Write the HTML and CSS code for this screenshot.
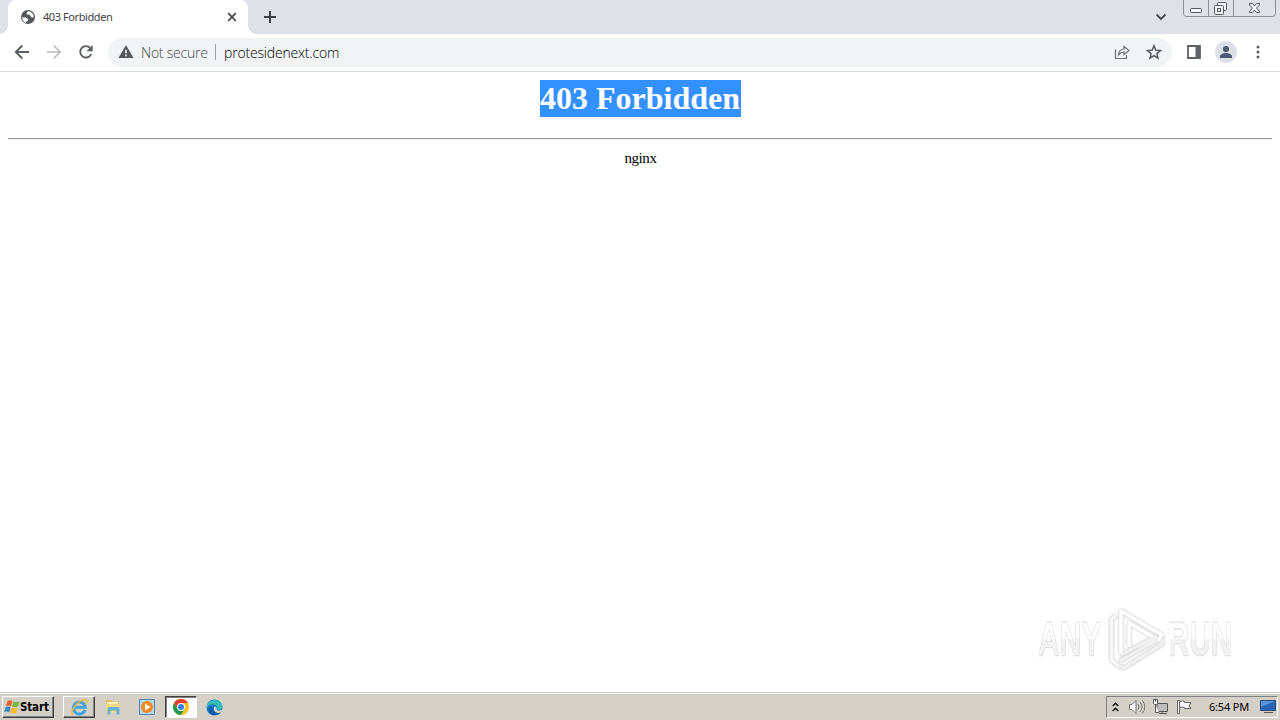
FILE: index.html
```html
<!DOCTYPE html>
<html lang="en">
<head>
<meta charset="utf-8">
<title>403 Forbidden</title>
<link rel="stylesheet" href="styles.css">
</head>
<body>
<header class="tabstrip">
  <div class="tab">
    <svg class="globe" width="16" height="16" viewBox="0 0 16 16"><circle cx="8" cy="8" r="7" fill="#55595d"/><path d="M2.300 8.200 5.800 8.500 8.300 10.200 7.800 12 6 12.500V14C3.500 13 2 11 2.300 8.200ZM8 2.200 6.400 4.100 7.200 5.600 9.700 5.800 11.300 8.200 13.700 8.500C14 5 11.500 2.500 8 2.200Z" fill="#fff"/></svg>
    <span class="tab-title">403 Forbidden</span>
    <svg class="tab-close" width="10" height="10" viewBox="0 0 10 10"><path d="M1.200 1.200l7.600 7.600M8.800 1.200 1.200 8.800" stroke="#45494d" stroke-width="1.700"/></svg>
  </div>
  <svg class="new-tab" width="14" height="14" viewBox="0 0 14 14"><path d="M7 1v12M1 7h12" stroke="#3c4043" stroke-width="2"/></svg>
  <svg class="tab-search" width="12" height="8" viewBox="0 0 12 8"><path d="M1.500 1.500 6 6l4.500-4.500" fill="none" stroke="#45494d" stroke-width="1.800"/></svg>
  <svg class="window-buttons" width="94" height="18" viewBox="0 0 94 18"><path d="M.5 0v13.500q0 3 3 3h86q3 0 3-3V0M25.500 0v16.500M50.500 0v16.500" fill="none" stroke="#8c9099"/><g fill="#f4f5f7" stroke="#545963"><rect x="7.500" y="8.500" width="11" height="4" rx="1"/><rect x="34.500" y="2.500" width="9" height="8" rx="1"/><rect x="31.500" y="5.500" width="9" height="9" rx="1"/><rect x="34.500" y="8.500" width="3" height="3"/><path d="M66.500 3.500h3l2 2.500 2-2.500h3v1.500L73.500 8l3 3.300v1.200h-3l-2-2.500-2 2.500h-3v-1.200l3-3.300-3-3z"/></g></svg>
</header>
<nav class="toolbar">
  <svg class="back" width="16" height="16" viewBox="0 0 16 16" fill="none" stroke="#5a5e62" stroke-width="1.900"><path d="M15 8H2.500M8.300 1.500 1.800 8l6.500 6.500"/></svg>
  <svg class="forward" width="16" height="16" viewBox="0 0 16 16" fill="none" stroke="#b8babd" stroke-width="1.700"><path d="M1 8h12.500M7.700 1.500 14.200 8l-6.500 6.500"/></svg>
  <svg class="reload" width="16" height="16" viewBox="0 0 16 16"><path d="M13.200 10A5.700 5.700 0 1 1 12.300 4.200" fill="none" stroke="#5a5e62" stroke-width="1.900"/><path d="M14.700 1v6.300H8.400z" fill="#5a5e62"/></svg>
  <div class="omnibox">
    <svg width="16" height="14" viewBox="0 0 16 14"><path d="M8 0 15.500 13H.5z" fill="#55595d"/><path d="M8 4.700v3.500M8 9.500v1.700" stroke="#f1f3f4" stroke-width="1.600"/></svg>
    <span class="security">Not secure</span>
    <span class="divider"></span>
    <span class="url">protesidenext.com</span>
    <svg class="share" width="16" height="16" viewBox="0 0 16 16" fill="none" stroke="#6b6f73" stroke-width="1.200"><path d="M1.500 5.500v9h11v-3.500M4.500 11c.3-4 2.300-6 5.500-6V2.500l5 4-5 4V8C7.500 8 6 9 4.500 11z"/></svg>
    <svg class="star" width="16" height="16" viewBox="0 0 16 16" fill="none" stroke="#505458" stroke-width="1.400"><path d="m8 1.700 1.800 4.400 4.700.4-3.600 3.100 1.100 4.600L8 11.700l-4 2.500 1.100-4.600-3.600-3.100 4.700-.4z"/></svg>
  </div>
  <svg class="panel" width="14" height="14" viewBox="0 0 14 14"><path d="M1 1h12v12H1z" fill="#fff" stroke="#5f6368" stroke-width="1.800"/><path d="M8.500 1H13v12H8.500z" fill="#5f6368"/></svg>
  <svg class="avatar" width="22" height="22" viewBox="0 0 22 22"><circle cx="11" cy="11" r="11" fill="#dce0e6"/><circle cx="11" cy="8" r="3.100" fill="#4d5872"/><path d="M5 17v-1.500c0-2.200 3.200-3.500 6-3.500s6 1.300 6 3.500V17z" fill="#4d5872"/></svg>
  <svg class="menu" width="4" height="14" viewBox="0 0 4 14" fill="#5a5e62"><circle cx="2" cy="2" r="1.500"/><circle cx="2" cy="7" r="1.500"/><circle cx="2" cy="12" r="1.500"/></svg>
</nav>
<main class="page">
  <h1><span class="selection">403 Forbidden</span></h1>
  <hr>
  <p class="server">nginx</p>
  <div class="watermark">
    <span class="wm-word wm-any">ANY</span>
    <svg class="wm-logo" width="58" height="64" viewBox="0 0 58 64" fill="none" stroke-linejoin="round" stroke-width="3.600"><path d="M8 9 3.500 12v41l7 6" stroke="#f8f8f8"/><path d="M13 47V4l41 24-3.500 5L21 16v24" stroke="#fff"/><path d="M13 48 49 29M12 54l38-22M10.500 59 16 61l38-24v-6" stroke="#f0f0f0"/></svg>
    <span class="wm-word wm-run">RUN</span>
  </div>
</main>
<footer class="taskbar">
  <div class="start">
    <svg width="17" height="16" viewBox="0 0 17 16"><path d="M3.500 2Q6 .5 8.500 2L7 7.200Q4.500 6 2 7z" fill="#e8622c"/><path d="M9.500 2.500q2.500 1.300 6-.2L14 7.500q-3 1.500-6 0z" fill="#75b83e"/><path d="M1.700 8q2.600-1 5 .2L5.200 13.500Q3 12 .2 13z" fill="#3e87cc"/><path d="M7.700 8.500q3 1.500 6 .2L12.200 14q-3 1.200-6-.3z" fill="#f5bd2d"/></svg>
    <span>Start</span>
  </div>
  <div class="task raised"><svg width="18" height="18" viewBox="0 0 18 18"><path d="M15 12A6 6 0 1 1 15.300 9.200H4.500" fill="none" stroke="#3fa4e0" stroke-width="2.900"/><path d="M3 16.700C-1.500 14.500 8.500 1.300 15.500 1.500c2.200.3 1.500 3.200 0 5" fill="none" stroke="#e8bd3c" stroke-width="1.500"/></svg></div>
  <svg class="folder" width="16" height="16" viewBox="0 0 16 16"><path d="M1 1h5l1 1.500h7V13H1z" fill="#e0bd60"/><path d="M2 3h11v5H2z" fill="#fff3b5"/><path d="M1 5h14v8.500H1z" fill="#f1d982"/><path d="M2.500 15.500V10Q2.500 8 4.500 8h8q2 0 2 2v5.500h-3v-4h-6v4z" fill="#65b1dd"/></svg>
  <svg class="media" width="16" height="16" viewBox="0 0 16 16"><path d="M.5.500h15v15H.5z" fill="#b7d8f0" stroke="#4d87b8"/><circle cx="8" cy="8" r="6" fill="#f28b20"/><path d="m6 4.500 5.500 3.500L6 11.500z" fill="#fff"/></svg>
  <div class="task pressed"><svg width="16" height="16" viewBox="0 0 16 16"><circle cx="8" cy="8" r="8" fill="#fbc116"/><path d="M1.070 4A8 8 0 0 1 14.930 4H8L4.540 10z" fill="#e43e30"/><path d="M1.070 4A8 8 0 0 0 8 16l3.460-6H4.540z" fill="#229a4b"/><circle cx="8" cy="8" r="4" fill="#fff"/><circle cx="8" cy="8" r="3" fill="#347de1"/></svg></div>
  <svg class="edge" width="17" height="17" viewBox="0 0 17 17"><circle cx="8.500" cy="8.500" r="8" fill="#1378c5"/><path d="M1 6.500C3 0 15-1.500 16.500 7c.3 3-2.500 4.500-6 3.500 2-3-1-5-4-5-2.500 0-4.500 1-5.500 3z" fill="#36bbb5"/><path d="M6.500 7.500c-1.500 3.500 2 7.500 8 5.500-2 4-8 4-10.500.5-2-3-.5-5.500 2.500-6z" fill="#1059a5"/><path d="M8 8.500c1-2 3-1 2.500 1.500-.2 1.500 3 2.500 6 .5l-1.500 3C10 15 7 12 8 8.500z" fill="#d4d0c8"/></svg>
  <div class="tray">
    <svg class="chevrons" width="7" height="10" viewBox="0 0 7 10"><path d="m.7 4 2.800-2.800L6.300 4M.7 9l2.800-2.800L6.300 9" fill="none" stroke="#111" stroke-width="1.500"/></svg>
    <svg class="sound" width="18" height="16" viewBox="0 0 18 16"><path d="M1.500 5.500H4l4-4v13l-4-4H1.500z" fill="#fafafa" stroke="#777"/><path d="M10 5q2 3 0 6M12 3q4 5 0 10M14.500 1.500q4.500 6.500 0 13" fill="none" stroke="#777"/></svg>
    <svg class="network" width="17" height="16" viewBox="0 0 17 16"><path d="M5 4.500h10.500v8H5zM7 14.500h8M10 12.500v2" fill="#bdbdbd" stroke="#555"/><path d="M1.500.500h4v4l-1 1h-2l-1-1zM3.500 5.500v8H7M3.500.500v2" fill="#fff" stroke="#555"/></svg>
    <svg class="flag" width="17" height="16" viewBox="0 0 17 16"><path d="M1.500 1.500h2v13h-2zM3.500 2.500q3-1 5 0v1h6.500l-2 3.500 2 2.500H8.500v-1q-2-1-5 0" fill="#f8f8f8" stroke="#666"/></svg>
    <span class="clock">6:54 PM</span>
    <svg class="desktop" width="16" height="14" viewBox="0 0 16 14"><path d="M.5.500h15v10H.5z" fill="#2865b8" stroke="#264b7a"/><path d="M1 1h14L1 7z" fill="#5796dc"/><path d="M4 12.500h9" stroke="#555"/></svg>
  </div>
</footer>
</body>
</html>
```
FILE: styles.css
```css
* { box-sizing: border-box; }
body { margin: 0; width: 1280px; height: 720px; overflow: hidden; display: flex; flex-direction: column; background: #fff; }
svg { display: block; flex: none; }
span { white-space: nowrap; }

.tabstrip { height: 34px; flex: none; display: flex; align-items: flex-start; padding-left: 8px; background: #dee1e6; }
.tab { position: relative; width: 240px; height: 34px; display: flex; align-items: center; padding: 0 11px 0 12px; background: #fff; border-radius: 8px 8px 0 0; }
.tab::before, .tab::after { content: ""; position: absolute; bottom: 0; width: 8px; height: 8px; }
.tab::before { left: -8px; background: radial-gradient(circle at 0 0, transparent 7.5px, #fff 8px); }
.tab::after { right: -8px; background: radial-gradient(circle at 100% 0, transparent 7.5px, #fff 8px); }
.tab-title { margin-left: 7px; font: 11px/14px "Noto Sans", sans-serif; letter-spacing: -0.42px; color: #3f4347; }
.tab-close { margin-left: auto; }
.new-tab { margin: 10px 0 0 15px; }
.tab-search { margin: 13px 16px 0 auto; }
.window-buttons { margin-right: 3px; }

.toolbar { height: 38px; flex: none; display: flex; align-items: center; padding: 0 20px 1px 14px; border-bottom: 1px solid #dadce0; }
.forward, .reload { margin-left: 16px; }
.omnibox { flex: 1; height: 29px; display: flex; align-items: center; margin: 0 15px 0 14px; padding: 0 10px; border-radius: 15px; background: #f1f3f4; }
.security, .url { padding-top: 1px; font: 300 14px/20px "Open Sans", sans-serif; }
.security { width: 67px; margin-left: 7px; letter-spacing: -0.22px; color: #45494d; }
.divider { width: 1px; height: 16px; margin: 0 8px 0 7px; background: #9b9fa3; }
.url { letter-spacing: -0.18px; color: #000; }
.share { margin-left: auto; }
.star { margin-left: 16px; }
.panel { margin-right: 14px; }
.menu { margin-left: 19px; }

.page { position: relative; flex: 1; padding: 8px; font: 16px/18px "Liberation Serif", serif; text-align: center; }
.page h1 { margin: 0; font-size: 32px; line-height: 37px; }
.selection { display: inline-block; width: 201px; height: 37px; background: #3390ff; color: #fff; }
.page hr { margin: 21px 0 8px; border: 0; height: 2px; border-top: 1px solid #9a9a9a; border-bottom: 1px solid #ededed; }
.server { margin: 0; padding-left: 1px; font-size: 15px; line-height: 21px; letter-spacing: -0.4px; }
.watermark { position: absolute; left: 1038px; top: 535px; display: flex; align-items: center; }
.wm-word { display: block; flex: none; width: 104px; text-align: left; font: bold 47px/60px "Liberation Sans", sans-serif; color: transparent; background: linear-gradient(#fff 50%, #f2f2f2 50%); background-clip: text; -webkit-background-clip: text; filter: drop-shadow(0 0 1px #c4c4c4) drop-shadow(0 0 1px #e2e2e2); transform-origin: left; }
.wm-any { margin-right: -34px; transform: scaleX(.64); }
.wm-logo { filter: drop-shadow(0 0 1px #c8c8c8) drop-shadow(0 0 1px #e6e6e6); }
.wm-run { margin-left: 2px; transform: scaleX(.63); }

.taskbar { height: 28px; flex: none; display: flex; align-items: center; padding: 2px 2px 0; background: #d4d0c8; box-shadow: inset 0 1px #d4d0c8, inset 0 2px #fff; }
.start { width: 52px; height: 22px; display: flex; align-items: center; padding-left: 1px; font: bold 11.5px/14px "DejaVu Sans Condensed", "DejaVu Sans", sans-serif; color: #000; border: 1px solid; border-color: #fff #404040 #404040 #fff; box-shadow: inset -1px -1px #808080; }
.start span { margin-left: -1px; letter-spacing: -0.15px; }
.task { display: flex; align-items: center; justify-content: center; width: 32px; height: 22px; border: 1px solid; }
.raised { margin-left: 9px; border-color: #fff #404040 #404040 #fff; box-shadow: inset -1px -1px #808080; }
.pressed { margin-left: 10px; background: #fff; border-color: #404040 #fff #fff #404040; box-shadow: inset 1px 1px #808080; }
.folder { margin-left: 10px; }
.media { margin-left: 18px; }
.edge { margin-left: 9px; }
.tray { width: 172px; height: 22px; display: flex; align-items: center; margin-left: auto; padding-left: 5px; border: 1px solid; border-color: #808080 #fff #fff #808080; }
.sound { margin-left: 9px; }
.network { margin-left: 6px; }
.flag { margin-left: 7px; }
.clock { width: 40px; margin-left: 16px; font: 11px/14px "Noto Sans", sans-serif; letter-spacing: -0.2px; color: #000; }
.desktop { margin-left: 11px; }
```
